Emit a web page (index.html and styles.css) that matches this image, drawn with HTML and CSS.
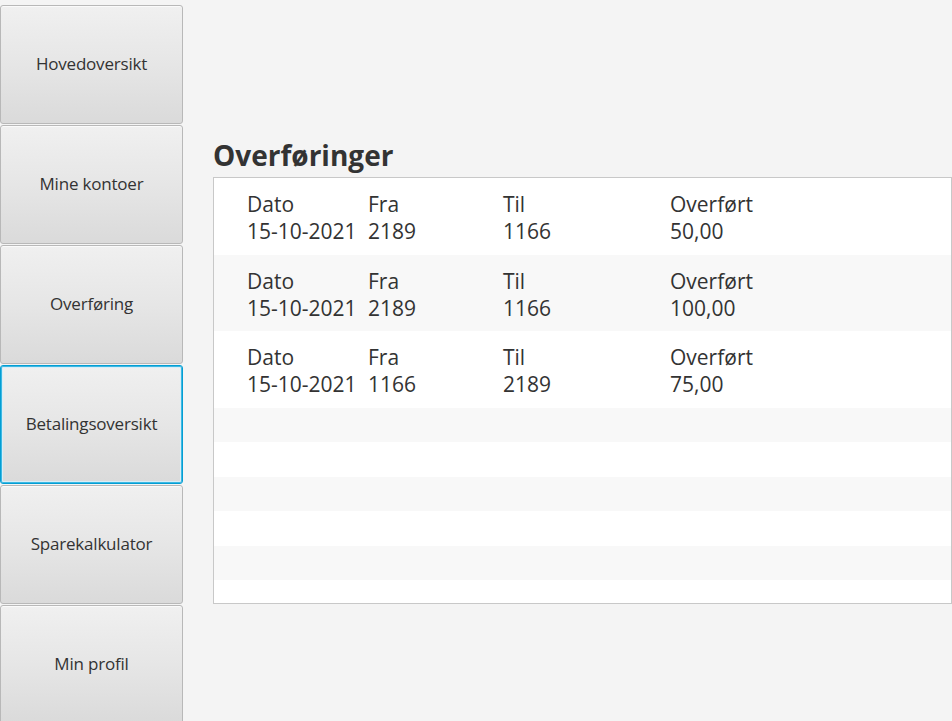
FILE: index.html
```html
<!DOCTYPE html>
<html lang="no">
<head>
<meta charset="utf-8">
<title>Overføringer</title>
<link rel="stylesheet" href="styles.css">
</head>
<body>
<div class="app">
  <nav class="sidebar">
    <button class="nav-btn">Hovedoversikt</button>
    <button class="nav-btn">Mine kontoer</button>
    <button class="nav-btn">Overføring</button>
    <button class="nav-btn focused">Betalingsoversikt</button>
    <button class="nav-btn">Sparekalkulator</button>
    <button class="nav-btn">Min profil</button>
  </nav>
  <main class="content">
    <h1 class="title">Overføringer</h1>
    <div class="list">
      <div class="row data">
        <div class="cell c1"><span class="lbl">Dato</span><span class="val">15-10-2021</span></div>
        <div class="cell c2"><span class="lbl">Fra</span><span class="val">2189</span></div>
        <div class="cell c3"><span class="lbl">Til</span><span class="val">1166</span></div>
        <div class="cell c4"><span class="lbl">Overført</span><span class="val">50,00</span></div>
      </div>
      <div class="row data odd">
        <div class="cell c1"><span class="lbl">Dato</span><span class="val">15-10-2021</span></div>
        <div class="cell c2"><span class="lbl">Fra</span><span class="val">2189</span></div>
        <div class="cell c3"><span class="lbl">Til</span><span class="val">1166</span></div>
        <div class="cell c4"><span class="lbl">Overført</span><span class="val">100,00</span></div>
      </div>
      <div class="row data">
        <div class="cell c1"><span class="lbl">Dato</span><span class="val">15-10-2021</span></div>
        <div class="cell c2"><span class="lbl">Fra</span><span class="val">1166</span></div>
        <div class="cell c3"><span class="lbl">Til</span><span class="val">2189</span></div>
        <div class="cell c4"><span class="lbl">Overført</span><span class="val">75,00</span></div>
      </div>
      <div class="row empty odd"></div>
      <div class="row empty"></div>
      <div class="row empty odd"></div>
      <div class="row empty"></div>
      <div class="row empty odd"></div>
      <div class="row filler"></div>
    </div>
  </main>
</div>
</body>
</html>
```

FILE: styles.css
```css
html, body {
  margin: 0;
  padding: 0;
  height: 100%;
  background: #f4f4f4;
  font-family: "Open Sans", "Segoe UI", "Noto Sans", sans-serif;
  color: #333333;
  overflow: hidden;
}

.app {
  display: flex;
  height: 721px;
}

.sidebar {
  display: flex;
  flex-direction: column;
  width: 183px;
  padding-top: 5px;
  gap: 1px;
  flex-shrink: 0;
}

.nav-btn {
  box-sizing: border-box;
  width: 183px;
  height: 119px;
  flex-shrink: 0;
  margin: 0;
  padding: 0 0 2px 0;
  border: 1px solid #b8b8b8;
  border-radius: 3px;
  background: linear-gradient(to bottom, #f0f0f0 0%, #e6e6e6 50%, #dadada 100%);
  box-shadow: inset 0 1px 0 #fafafa;
  font-family: "Open Sans", "Segoe UI", sans-serif;
  font-size: 17px;
  letter-spacing: -0.2px;
  color: #333333;
  text-align: center;
}

.nav-btn.focused {
  border: 1px solid #039ed3;
  box-shadow: inset 0 0 0 1px #3db8e3, inset 0 0 0 2px #d8eef7;
}

.content {
  flex: 1;
  display: flex;
  flex-direction: column;
  padding-top: 134px;
  padding-left: 30px;
}

.title {
  margin: 0;
  height: 43px;
  font-size: 28px;
  font-weight: 700;
  line-height: 43px;
  color: #333333;
  letter-spacing: 0;
}

.list {
  box-sizing: border-box;
  width: 739px;
  height: 427px;
  border: 1px solid #c8c8c8;
  background: #ffffff;
  display: flex;
  flex-direction: column;
}

.row {
  display: flex;
  background: #ffffff;
  flex-shrink: 0;
}

.row.odd {
  background: #f8f8f8;
}

.row.data {
  height: 76.5px;
  padding-left: 33px;
  padding-top: 13px;
  box-sizing: border-box;
}

.row.empty {
  height: 34.5px;
}

.row.filler {
  flex: 1;
}

.cell {
  display: flex;
  flex-direction: column;
  font-size: 21px;
  line-height: 27px;
  color: #333333;
}

.c1 { width: 121px; }
.c2 { width: 135px; }
.c3 { width: 167px; }
.c4 { width: 150px; }
```
